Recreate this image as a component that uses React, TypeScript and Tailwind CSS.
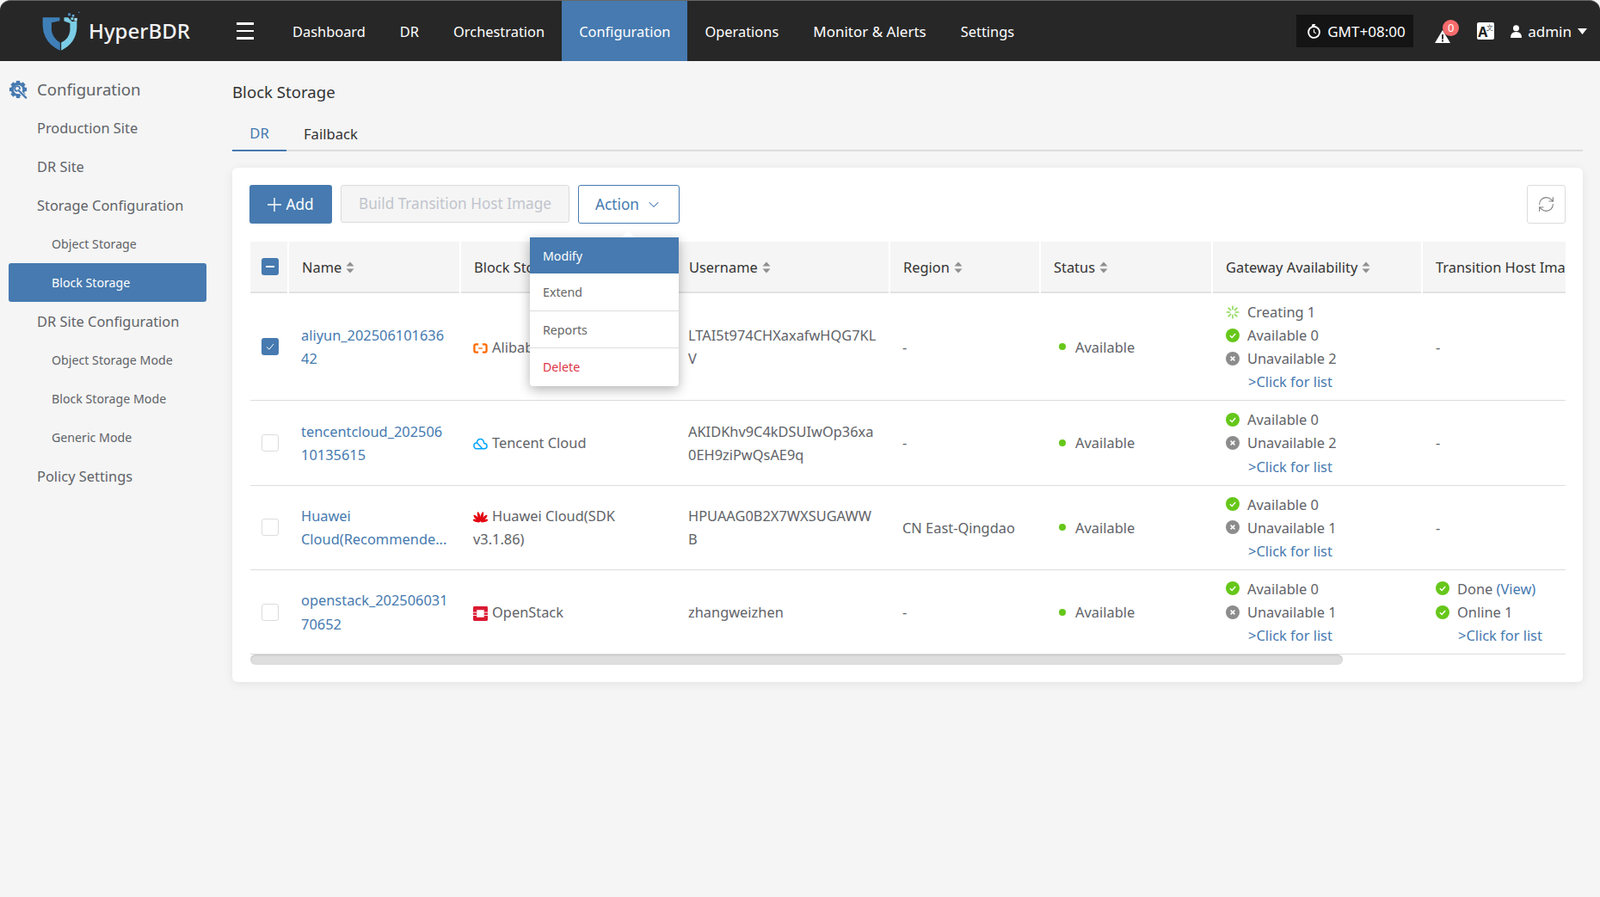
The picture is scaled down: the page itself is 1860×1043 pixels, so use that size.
import React from "react";
import { ChevronDown, RefreshCw } from "lucide-react";

const navItems = ["Dashboard", "DR", "Orchestration", "Configuration", "Operations", "Monitor & Alerts", "Settings"];

function Logo() {
  return (
    <svg viewBox="80 35 140 145" className="w-[47px] h-[48px] shrink-0">
      <path d="M87 60 L147 60 L147 72 L118 78 L118 105 Q121 132 148 148 L148 176 Q112 160 97 130 Q87 110 87 88 Z" fill="#3f7fb8" />
      <path d="M152 176 L152 148 Q180 135 183 105 L183 80 L162 73 L162 60 L176 60 L190 75 L207 72 L207 95 Q205 150 152 176 Z" fill="#7bcde6" />
      <rect x="176" y="45" width="9" height="9" fill="#4a88c0" />
      <rect x="190" y="50" width="8" height="8" fill="#6aa8d6" />
      <rect x="186" y="60" width="9" height="9" fill="#7bcde6" />
      <rect x="198" y="62" width="10" height="10" fill="#a8d8ea" />
      <rect x="212" y="40" width="4" height="4" fill="#4a88c0" />
    </svg>
  );
}

function ClockIcon() {
  return (
    <svg viewBox="0 0 18 20" className="w-[17px] h-[19px] shrink-0">
      <circle cx="9" cy="11" r="7.8" fill="#fff" />
      <circle cx="9" cy="11" r="5.8" fill="#141414" />
      <path d="M9 7.5 V11 L11.5 12.5" stroke="#fff" strokeWidth="1.2" fill="none" />
      <path d="M7 1 L11 1 L9.5 3.5 L13 4.5 L6 4 Z" fill="#fff" />
    </svg>
  );
}

function AlertIcon() {
  return (
    <svg viewBox="0 0 18 15" className="w-[18px] h-[15px]">
      <path d="M9 0 L18 15 L0 15 Z" fill="#fff" />
      <rect x="8" y="5" width="2" height="5.5" fill="#272727" />
      <rect x="8" y="11.5" width="2" height="2" fill="#272727" />
    </svg>
  );
}

function SidebarGear() {
  const teeth = [0, 45, 90, 135, 180, 225, 270, 315];
  return (
    <svg viewBox="0 0 24 24" className="w-[22px] h-[22px] shrink-0">
      {teeth.map((a) => (
        <rect key={a} x="9.6" y="1" width="4.8" height="5" fill="#467ab0" transform={`rotate(${a} 12 12)`} />
      ))}
      <circle cx="12" cy="12" r="7.4" fill="none" stroke="#467ab0" strokeWidth="3.2" />
      <circle cx="11" cy="11" r="3.2" fill="none" stroke="#467ab0" strokeWidth="2" />
      <path d="M12.5 13 L21 22" stroke="#f5f5f5" strokeWidth="4.5" />
      <path d="M12.5 13 L22 22.5" stroke="#467ab0" strokeWidth="2.4" strokeLinecap="round" />
    </svg>
  );
}

function SortIcon() {
  return (
    <svg viewBox="0 0 10 14" className="inline-block w-[10px] h-[14px] ml-[5px] align-[-1px]">
      <path d="M5 0.5 L9.5 5.5 L0.5 5.5 Z" fill="#8f8f8f" />
      <path d="M5 13.5 L9.5 8.5 L0.5 8.5 Z" fill="#8f8f8f" />
    </svg>
  );
}

function CheckCircle() {
  return (
    <svg viewBox="0 0 16 16" className="w-[16px] h-[16px] shrink-0">
      <circle cx="8" cy="8" r="8" fill="#66c71a" />
      <path d="M4.8 8.2 L7.2 10.4 L11.2 6" stroke="#fff" strokeWidth="1.4" fill="none" />
    </svg>
  );
}

function XCircle() {
  return (
    <svg viewBox="0 0 16 16" className="w-[16px] h-[16px] shrink-0">
      <circle cx="8" cy="8" r="8" fill="#8c8c8c" />
      <path d="M5.6 5.6 L10.4 10.4 M10.4 5.6 L5.6 10.4" stroke="#fff" strokeWidth="1.5" />
    </svg>
  );
}

function Spinner() {
  const a = [0, 45, 90, 135, 180, 225, 270, 315];
  return (
    <svg viewBox="0 0 16 16" className="w-[16px] h-[16px] shrink-0">
      {a.map((r) => (
        <rect key={r} x="7.2" y="0.5" width="1.6" height="4.8" rx="0.6" fill="#8fdb5c" transform={`rotate(${r} 8 8)`} />
      ))}
    </svg>
  );
}

function AliIcon() {
  return (
    <svg viewBox="0 0 18 14" className="inline-block w-[17px] h-[14px] mr-[5px] align-[-2px]">
      <path d="M6.5 2 H3.5 Q1.5 2 1.5 4 V10 Q1.5 12 3.5 12 H6.5 M11.5 2 H14.5 Q16.5 2 16.5 4 V10 Q16.5 12 14.5 12 H11.5" fill="none" stroke="#ff6a00" strokeWidth="2.4" />
      <rect x="6.5" y="6.3" width="5" height="1.4" fill="#ff6a00" />
    </svg>
  );
}

function TencentIcon() {
  return (
    <svg viewBox="0 0 18 14" className="inline-block w-[17px] h-[14px] mr-[5px] align-[-2px]">
      <path d="M4.5 13 H13.5 Q17 13 17 9.8 Q17 6.5 13.5 6.5 Q12.8 1.2 8.8 1.2 Q5.4 1.2 4.6 5.6 Q1 6 1 9.4 Q1 13 4.5 13 Z" fill="none" stroke="#00a4ff" strokeWidth="1.6" />
      <path d="M4.6 5.6 L11 12.5" stroke="#00a4ff" strokeWidth="1.6" />
    </svg>
  );
}

function HuaweiIcon() {
  const petals = [
    { r: -75, ry: 4.5 },
    { r: -45, ry: 5.5 },
    { r: -15, ry: 6 },
    { r: 15, ry: 6 },
    { r: 45, ry: 5.5 },
    { r: 75, ry: 4.5 },
  ];
  return (
    <svg viewBox="0 0 18 14" className="inline-block w-[17px] h-[14px] mr-[5px] align-[-2px]">
      {petals.map((p) => (
        <ellipse key={p.r} cx="9" cy={13 - p.ry - 0.5} rx="1.7" ry={p.ry} fill="#e30613" transform={`rotate(${p.r} 9 13)`} />
      ))}
    </svg>
  );
}

function OpenStackIcon() {
  return (
    <svg viewBox="0 0 18 18" className="inline-block w-[17px] h-[17px] mr-[5px] align-[-4px]">
      <rect x="0" y="0" width="18" height="18" rx="1.5" fill="#da1a32" />
      <rect x="4.5" y="4.5" width="9" height="9" fill="#fff" />
      <rect x="0" y="7" width="4.5" height="1" fill="#fff" />
      <rect x="0" y="10.5" width="4.5" height="1" fill="#fff" />
      <rect x="13.5" y="7" width="4.5" height="1" fill="#fff" />
      <rect x="13.5" y="10.5" width="4.5" height="1" fill="#fff" />
    </svg>
  );
}

function Box({ state }: { state: "none" | "checked" | "minus" }) {
  if (state === "none") {
    return <span className="block w-[20px] h-[20px] ml-[13px] rounded-[3px] border border-[#dcdcdc] bg-white" />;
  }
  return (
    <span className="flex items-center justify-center w-[20px] h-[20px] ml-[13px] rounded-[3px] bg-[#467ab0]">
      {state === "minus" ? (
        <span className="block w-[10px] h-[2px] bg-white" />
      ) : (
        <svg viewBox="0 0 12 12" className="w-[12px] h-[12px]">
          <path d="M2 6.5 L5 9.2 L10 3" stroke="#fff" strokeWidth="1" fill="none" />
        </svg>
      )}
    </span>
  );
}

function Line({ icon, children }: { icon?: React.ReactNode; children: React.ReactNode }) {
  return (
    <div className="flex items-center gap-[9px]">
      {icon ?? <span className="w-[16px] shrink-0" />}
      <span>{children}</span>
    </div>
  );
}

function ClickList() {
  return (
    <div className="pl-[26px] text-[#467ab0]">&gt;Click for list</div>
  );
}

const rows = [
  {
    check: "checked" as const,
    name: ["aliyun_202506101636", "42"],
    icon: <AliIcon />,
    storage: "Alibaba Cloud",
    user: ["LTAI5t974CHXaxafwHQG7KL", "V"],
    region: "-",
    gateway: (
      <>
        <Line icon={<Spinner />}>Creating 1</Line>
        <Line icon={<CheckCircle />}>Available 0</Line>
        <Line icon={<XCircle />}>Unavailable 2</Line>
        <ClickList />
      </>
    ),
    host: <span>-</span>,
  },
  {
    check: "none" as const,
    name: ["tencentcloud_202506", "10135615"],
    icon: <TencentIcon />,
    storage: "Tencent Cloud",
    user: ["AKIDKhv9C4kDSUIwOp36xa", "0EH9ziPwQsAE9q"],
    region: "-",
    gateway: (
      <>
        <Line icon={<CheckCircle />}>Available 0</Line>
        <Line icon={<XCircle />}>Unavailable 2</Line>
        <ClickList />
      </>
    ),
    host: <span>-</span>,
  },
  {
    check: "none" as const,
    name: ["Huawei", "Cloud(Recommende..."],
    icon: <HuaweiIcon />,
    storage: "Huawei Cloud(SDK v3.1.86)",
    user: ["HPUAAG0B2X7WXSUGAWW", "B"],
    region: "CN East-Qingdao",
    gateway: (
      <>
        <Line icon={<CheckCircle />}>Available 0</Line>
        <Line icon={<XCircle />}>Unavailable 1</Line>
        <ClickList />
      </>
    ),
    host: <span>-</span>,
  },
  {
    check: "none" as const,
    name: ["openstack_202506031", "70652"],
    icon: <OpenStackIcon />,
    storage: "OpenStack",
    user: ["zhangweizhen"],
    region: "-",
    gateway: (
      <>
        <Line icon={<CheckCircle />}>Available 0</Line>
        <Line icon={<XCircle />}>Unavailable 1</Line>
        <ClickList />
      </>
    ),
    host: (
      <>
        <Line icon={<CheckCircle />}>
          Done <span className="text-[#467ab0]">(View)</span>
        </Line>
        <Line icon={<CheckCircle />}>Online 1</Line>
        <ClickList />
      </>
    ),
  },
];

const headers = ["Name", "Block Storage", "Username", "Region", "Status", "Gateway Availability", "Transition Host Image"];

export default function App() {
  return (
    <div className="w-[1860px] h-[1043px] overflow-hidden bg-[#f5f5f5] font-['Noto_Sans','Open_Sans',sans-serif] text-[16.4px] leading-[27.1px] text-[#5f6368]">
      <header className="h-[71px] flex items-stretch bg-[#272727] rounded-t-[12px] border-t border-[#666666] text-white">
        <div className="w-[275px] shrink-0 flex items-center pl-[47px]">
          <Logo />
          <span className="ml-[9px] text-[24px] font-medium leading-none text-[#f4f4f4]">HyperBDR</span>
        </div>
        <div className="w-[20px] shrink-0 flex flex-col justify-center gap-[6px]">
          <span className="block h-[2.5px] bg-white" />
          <span className="block h-[2.5px] bg-white" />
          <span className="block h-[2.5px] bg-white" />
        </div>
        <nav className="ml-[25px] flex items-stretch text-[16.4px]">
          {navItems.map((n) => (
            <div
              key={n}
              className={
                n === "Configuration"
                  ? "flex items-center px-[20px] pt-[1px] bg-[#467ab0] text-white"
                  : n === "Monitor & Alerts"
                    ? "flex items-center px-[20px] pt-[1px] text-[17px] text-white"
                    : "flex items-center px-[20px] pt-[1px] text-white"
              }
            >
              {n}
            </div>
          ))}
        </nav>
        <div className="ml-auto flex items-center pr-[15px] text-[17px]">
          <div className="h-[38px] w-[136px] flex items-center pl-[12px] gap-[7px] bg-[#141414]">
            <ClockIcon />
            <span className="pt-[1px]">GMT+08:00</span>
          </div>
          <div className="relative ml-[25px] w-[18px] h-[15px] mt-[13px]">
            <AlertIcon />
            <span className="absolute -top-[12px] left-[9px] w-[19px] h-[19px] rounded-full bg-[#f56c6c] flex items-center justify-center text-[13px] leading-none text-white">
              0
            </span>
          </div>
          <div className="relative ml-[31px] w-[20px] h-[20px] rounded-[2px] bg-white">
            <span className="absolute left-[1px] top-[3px] text-[16px] leading-[16px] font-bold text-[#222]">A</span>
            <span className="absolute right-[1px] top-[1px] text-[8px] leading-[9px] text-[#444] font-['Noto_Sans_CJK_SC',sans-serif]">文</span>
          </div>
          <svg viewBox="0 0 14 16" className="ml-[19px] w-[13px] h-[15px]">
            <circle cx="7" cy="4" r="3.8" fill="#fff" />
            <path d="M0 16 Q0 8.5 7 8.5 Q14 8.5 14 16 Z" fill="#fff" />
          </svg>
          <span className="ml-[7px] pt-[1px]">admin</span>
          <svg viewBox="0 0 11 7" className="ml-[7px] w-[11px] h-[7px]">
            <path d="M0 0 H11 L5.5 7 Z" fill="#fff" />
          </svg>
        </div>
      </header>

      <div className="flex">
        <aside className="w-[270px] shrink-0 pt-[10px] pl-[10px]">
          <div className="h-[45px] flex items-center gap-[11px] text-[18.6px]">
            <SidebarGear />
            <span>Configuration</span>
          </div>
          {[
            ["Production Site", false],
            ["DR Site", false],
            ["Storage Configuration", false],
            ["Object Storage", true],
          ].map(([t, sub]) => (
            <div
              key={t as string}
              className={sub ? "h-[45px] flex items-center pl-[50px] text-[14.2px]" : "h-[45px] flex items-center pl-[33px]"}
            >
              {t}
            </div>
          ))}
          <div className="h-[45px] w-[230px] flex items-center pl-[50px] text-[14.2px] rounded-[3px] bg-[#467ab0] text-white">
            Block Storage
          </div>
          {[
            ["DR Site Configuration", false],
            ["Object Storage Mode", true],
            ["Block Storage Mode", true],
            ["Generic Mode", true],
            ["Policy Settings", false],
          ].map(([t, sub]) => (
            <div
              key={t as string}
              className={sub ? "h-[45px] flex items-center pl-[50px] text-[14.2px]" : "h-[45px] flex items-center pl-[33px]"}
            >
              {t}
            </div>
          ))}
        </aside>

        <main className="w-[1570px] pt-[22px]">
          <h1 className="text-[18.6px] leading-[28px] text-[#333]">Block Storage</h1>
          <div className="mt-[7px] h-[48px] flex border-b-2 border-[#dddddd] text-[#333] text-[16.6px]">
            <div className="h-[48px] w-[63px] pt-[8px] flex items-center justify-center border-b-2 border-[#467ab0] text-[#467ab0]">DR</div>
            <div className="h-[48px] px-[20px] pt-[8px] flex items-center">Failback</div>
          </div>

          <section className="mt-[19px] bg-white rounded-[6px] shadow-[0_2px_12px_rgba(0,0,0,0.08)] p-[20px] pb-[20px]">
            <div className="flex items-start text-[17.2px]">
              <button className="h-[45px] w-[96px] flex items-center justify-center gap-[5px] rounded-[3px] bg-[#467ab0] text-white">
                <svg viewBox="0 0 16 16" className="w-[16px] h-[16px]">
                  <path d="M8 0 V16 M0 8 H16" stroke="#fff" strokeWidth="1.4" />
                </svg>
                Add
              </button>
              <button className="ml-[10px] h-[44px] w-[266px] rounded-[3px] border border-[#dcdcdc] bg-[#f5f5f5] text-[#c0c4cc]">
                Build Transition Host Image
              </button>
              <div className="relative ml-[10px]">
                <button className="h-[45px] w-[118px] flex items-center justify-center gap-[7px] rounded-[3px] border border-[#467ab0] bg-white text-[#467ab0]">
                  Action
                  <ChevronDown size={20} strokeWidth={1.25} />
                </button>
                <div className="absolute z-10 right-[1px] top-[61px] w-[173px] rounded-b-[4px] bg-white shadow-[0_4px_14px_rgba(0,0,0,0.3)] text-[14.2px] text-[#666]">
                  <span className="absolute -top-[8px] left-[106px] w-0 h-0 border-x-[8px] border-x-transparent border-b-[8px] border-b-white" />
                  <div className="h-[42px] flex items-center pl-[15px] pt-[1px] bg-[#467ab0] text-white">Modify</div>
                  <div className="h-[44px] flex items-center pl-[15px] border-b border-[#dddddd]">Extend</div>
                  <div className="h-[43px] flex items-center pl-[15px] pt-[1px] border-b border-[#dddddd]">Reports</div>
                  <div className="h-[44px] flex items-center pl-[15px] text-[#dc3545]">Delete</div>
                </div>
              </div>
              <button className="ml-auto h-[45px] w-[45px] flex items-center justify-center rounded-[3px] border border-[#dcdcdc] bg-white text-[#7f7f7f]">
                <RefreshCw size={21} strokeWidth={1.25} />
              </button>
            </div>

            <div className="mt-[21px] ml-px overflow-hidden">
              <table className="table-fixed border-collapse w-[1841px]">
                <colgroup>
                  <col className="w-[44px]" />
                  <col className="w-[200px]" />
                  <col className="w-[250px]" />
                  <col className="w-[249px]" />
                  <col className="w-[175px]" />
                  <col className="w-[200px]" />
                  <col className="w-[244px]" />
                  <col className="w-[479px]" />
                </colgroup>
                <thead>
                  <tr className="h-[59px] bg-[#f5f5f5] border-b-2 border-[#e2e2e2] text-[#333]">
                    <th className="border-r-2 border-white">
                      <Box state="minus" />
                    </th>
                    {headers.map((h, i) => (
                      <th
                        key={h}
                        className="px-[15px] pt-[1px] text-left font-normal whitespace-nowrap border-r-2 border-white"
                      >
                        {h}
                        {i !== 1 && i !== 6 ? <SortIcon /> : null}
                      </th>
                    ))}
                  </tr>
                </thead>
                <tbody>
                  {rows.map((r) => (
                    <tr key={r.name[0]} className="border-b border-[#dddddd]">
                      <td className="align-middle">
                        <Box state={r.check} />
                      </td>
                      <td className="pl-[15px] py-[8px] align-middle whitespace-nowrap text-[#467ab0]">
                        {r.name.map((l) => (
                          <div key={l}>{l}</div>
                        ))}
                      </td>
                      <td className="px-[15px] py-[8px] align-middle">
                        {r.icon}
                        {r.storage}
                      </td>
                      <td className="pl-[15px] py-[8px] align-middle whitespace-nowrap">
                        {r.user.map((l) => (
                          <div key={l}>{l}</div>
                        ))}
                      </td>
                      <td className="px-[15px] py-[8px] align-middle">{r.region}</td>
                      <td className="px-[15px] py-[8px] align-middle">
                        <span className="flex items-center gap-[11px] pl-[7px]">
                          <span className="w-[8px] h-[8px] rounded-full bg-[#66c71a]" />
                          Available
                        </span>
                      </td>
                      <td className="pl-[16px] pr-[14px] py-[8px] align-middle">{r.gateway}</td>
                      <td className="pl-[16px] pr-[14px] py-[8px] align-middle">{r.host}</td>
                    </tr>
                  ))}
                </tbody>
              </table>
              <div className="h-[12px] w-[1270px] rounded-full bg-[#dedede] shadow-[inset_0_1px_2px_rgba(0,0,0,0.12)]" />
            </div>
          </section>
        </main>
      </div>
    </div>
  );
}
